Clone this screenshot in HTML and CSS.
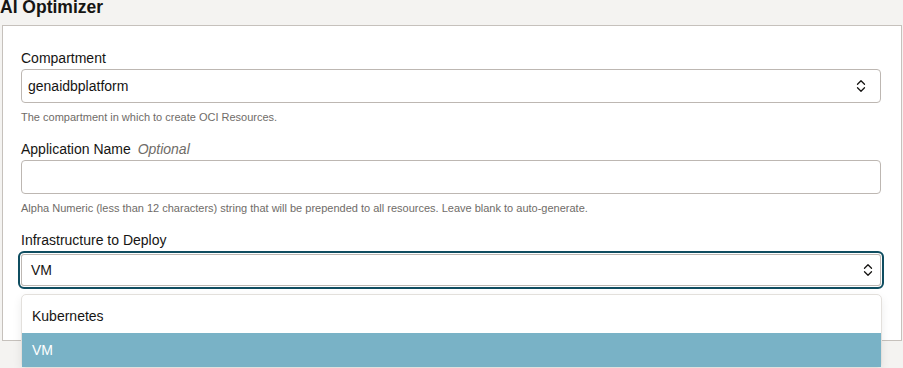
FILE: index.html
```html
<!DOCTYPE html>
<html lang="en">
<head>
<meta charset="utf-8">
<title>AI Optimizer</title>
<link rel="stylesheet" href="styles.css">
</head>
<body>
<main class="page">
  <h1 class="page-title">AI Optimizer</h1>
  <section class="card">
    <div class="field">
      <label class="field-label">Compartment</label>
      <div class="select">
        <span class="select-value">genaidbplatform</span>
        <svg class="chevron" viewBox="0 0 10 14" width="10" height="14" aria-hidden="true">
          <path d="M1.5 5.2 L5 1.7 L8.5 5.2"/>
          <path d="M1.5 8.8 L5 12.3 L8.5 8.8"/>
        </svg>
      </div>
      <p class="field-help">The compartment in which to create OCI Resources.</p>
    </div>
    <div class="field">
      <label class="field-label">Application Name <span class="optional">Optional</span></label>
      <input class="text-input" type="text">
      <p class="field-help">Alpha Numeric (less than 12 characters) string that will be prepended to all resources. Leave blank to auto-generate.</p>
    </div>
    <div class="field field--open">
      <label class="field-label">Infrastructure to Deploy</label>
      <div class="select select--focused">
        <span class="select-value">VM</span>
        <svg class="chevron" viewBox="0 0 10 14" width="10" height="14" aria-hidden="true">
          <path d="M1.5 5.2 L5 1.7 L8.5 5.2"/>
          <path d="M1.5 8.8 L5 12.3 L8.5 8.8"/>
        </svg>
      </div>
      <ul class="listbox">
        <li class="option">Kubernetes</li>
        <li class="option option--highlighted">VM</li>
      </ul>
    </div>
  </section>
</main>
</body>
</html>
```

FILE: styles.css
```css
html, body {
  margin: 0;
  padding: 0;
}

body {
  min-height: 100vh;
  background: #f4f3f1;
  font-family: "Liberation Sans", Arial, sans-serif;
  color: #161513;
}

.page {
  padding: 0;
}

.page-title {
  margin: -3px 0 8px 0;
  font-size: 17.5px;
  line-height: 20px;
  font-weight: bold;
  color: #161513;
}

.card {
  margin: 0 1px 0 2px;
  background: #ffffff;
  border: 1px solid #c6c1bc;
  padding: 24px 20px 51px 18px;
}

.field {
  margin-bottom: 17px;
}

.field:last-child {
  margin-bottom: 0;
}

.field-label {
  display: block;
  font-size: 14px;
  line-height: 17px;
  margin-bottom: 2px;
  color: #161513;
}

.optional {
  margin-left: 3px;
  font-style: italic;
  color: #6f6c68;
}

.select,
.text-input {
  box-sizing: border-box;
  height: 34px;
  border: 1px solid #bdb7b2;
  border-radius: 4px;
  background: #ffffff;
}

.text-input {
  display: block;
  width: 100%;
  margin: 0;
  padding: 0 6px;
  font: inherit;
  outline: none;
}

.select {
  display: flex;
  align-items: center;
  justify-content: space-between;
  padding: 0 14px 0 6px;
}

.select-value {
  font-size: 14px;
  line-height: 17px;
  color: #161513;
}

.chevron {
  display: block;
  fill: none;
  stroke: #161513;
  stroke-width: 1.3;
  stroke-linecap: round;
  stroke-linejoin: round;
}

.select--focused {
  height: 38px;
  margin: 0 -3px;
  border: 2px solid #0f4d60;
  border-radius: 6px;
  box-shadow: inset 0 0 0 1px #ffffff, inset 0 0 0 2px #bdb7b2;
  padding: 0 9px 0 11px;
}

.field-help {
  margin: 7px 0 0 0;
  font-size: 11px;
  line-height: 14px;
  color: #6f6c68;
}

.field--open {
  position: relative;
}

.listbox {
  position: absolute;
  z-index: 2;
  top: calc(100% + 5px);
  left: 0;
  right: -1px;
  margin: 0;
  padding: 4px 0 0 0;
  list-style: none;
  background: #ffffff;
  border: 1px solid #e3e0dc;
  border-radius: 5px;
  box-shadow: 0 4px 10px rgba(0, 0, 0, 0.08);
}

.option {
  height: 34px;
  line-height: 34px;
  padding: 0 10px;
  font-size: 14px;
  color: #161513;
}

.option--highlighted {
  background: #79b2c6;
  color: #ffffff;
}
```
